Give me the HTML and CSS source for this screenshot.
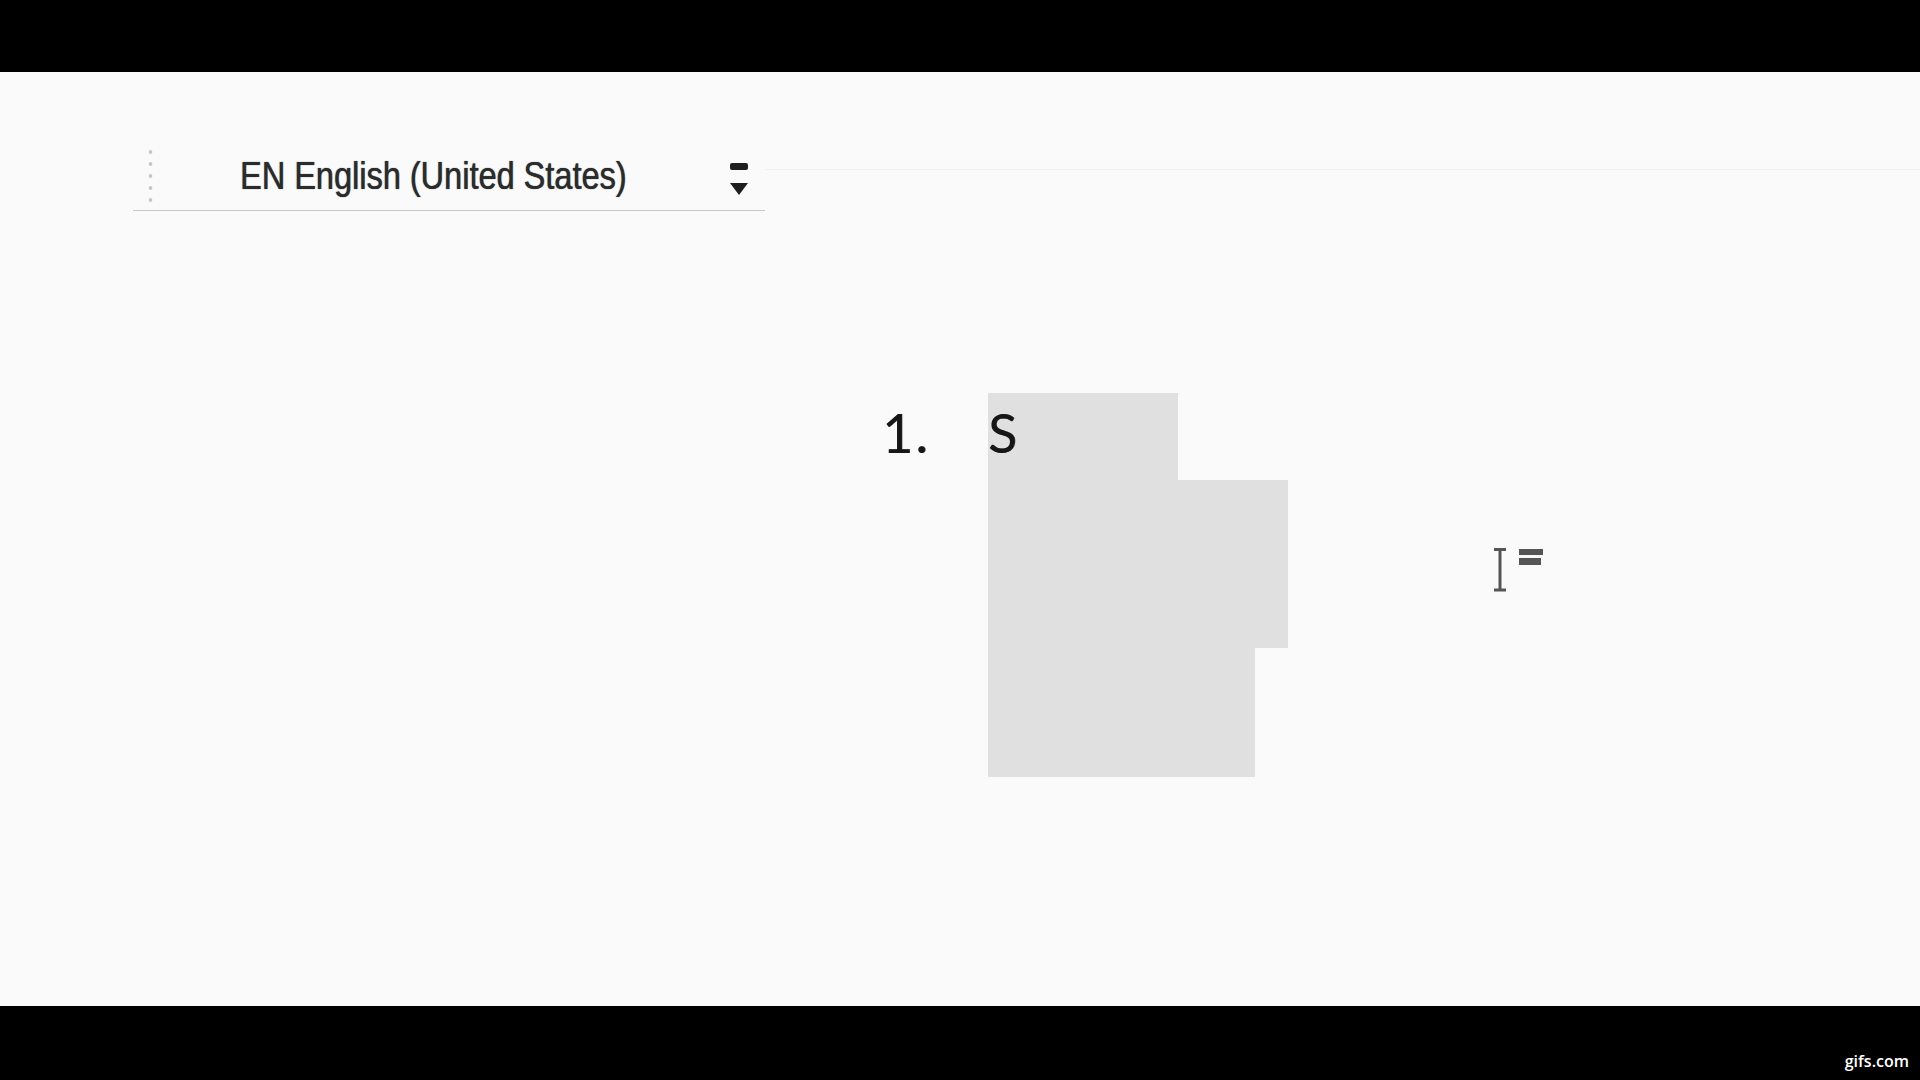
FILE: index.html
```html
<!DOCTYPE html>
<html lang="en">
<head>
<meta charset="utf-8">
<title>Document</title>
<link rel="stylesheet" href="styles.css">
</head>
<body>
<div class="topbar"></div>
<main class="canvas">
  <div class="toolbar-row">
    <div class="lang-select">
      <div class="grip"></div>
      <span class="lang-text">EN English (United States)</span>
      <div class="spacer"></div>
      <svg class="spin" width="18" height="32" viewBox="0 0 18 32">
        <rect x="0" y="0" width="18" height="7" rx="2" fill="#1e1e1e"/>
        <path d="M0 20 H18 L9 32 Z" fill="#1e1e1e"/>
      </svg>
    </div>
    <div class="rule"></div>
  </div>

  <div class="list-row">
    <div class="marker">1.</div>
    <div class="selection">
      <div class="sel sel-a"><span class="glyph">S</span></div>
      <div class="sel sel-b"></div>
      <div class="sel sel-c"></div>
    </div>
  </div>

  <svg class="cursor" width="52" height="44" viewBox="0 0 52 44">
    <path d="M2 1.5 H14 M8 1.5 V42 M2 42 H14" stroke="#555" stroke-width="3" fill="none"/>
    <rect x="27" y="1" width="24" height="6" fill="#555"/>
    <rect x="27" y="10" width="22" height="7" fill="#555"/>
  </svg>
</main>
<footer class="bottombar"><span class="brand">gifs.com</span></footer>
</body>
</html>
```

FILE: styles.css
```css
html, body {
  margin: 0;
  padding: 0;
  background: #000;
}

.topbar {
  height: 72px;
  background: #000;
}

.canvas {
  position: relative;
  height: 934px;
  box-sizing: border-box;
  padding-top: 68px;
  background: #fafafa;
  overflow: hidden;
}

.toolbar-row {
  display: flex;
  align-items: flex-start;
}

.lang-select {
  display: flex;
  align-items: flex-start;
  margin-left: 133px;
  width: 632px;
  height: 70px;
  border-bottom: 1px solid #c9c9c9;
}

.grip {
  width: 5px;
  height: 62px;
  margin-top: 6px;
  margin-left: 15px;
  background-image: radial-gradient(circle, #c4c4c4 1.4px, transparent 2.2px);
  background-size: 5px 12px;
  background-repeat: repeat-y;
}

.lang-text {
  display: inline-block;
  margin-left: 87px;
  margin-top: 20px;
  font-family: "Liberation Sans", Arial, sans-serif;
  font-size: 32.5px;
  line-height: 32px;
  color: #2b2b2b;
  white-space: nowrap;
  transform: scaleY(1.2);
  text-shadow: 0 0 1px rgba(40, 40, 40, 0.8), 0.5px 0 0 rgba(40, 40, 40, 0.5);
}

.spacer {
  flex: 1;
}

.spin {
  display: block;
  margin-top: 23px;
  margin-right: 17px;
}

.rule {
  flex: 1;
  height: 29px;
  border-bottom: 1px solid #f1eff1;
}

.list-row {
  display: flex;
  align-items: flex-start;
  margin-top: 182px;
  margin-left: 882px;
  font-family: Lato, "Open Sans", sans-serif;
  font-size: 54px;
  line-height: 1;
  color: #161616;
  text-shadow: 0.6px 0 0 rgba(22, 22, 22, 0.7);
}

.marker {
  width: 106px;
  padding-top: 13px;
  letter-spacing: 2px;
}

.selection {
  display: flex;
  flex-direction: column;
}

.sel {
  background: #e0e0e0;
}

.sel-a {
  width: 190px;
  height: 87px;
  box-sizing: border-box;
  padding-top: 13px;
}

.sel-b {
  width: 300px;
  height: 168px;
}

.sel-c {
  width: 267px;
  height: 129px;
}

.glyph {
  display: inline-block;
}

.cursor {
  position: absolute;
  left: 1492px;
  top: 476px;
}

.bottombar {
  height: 74px;
  background: #000;
  display: flex;
  justify-content: flex-end;
  align-items: flex-end;
  box-sizing: border-box;
  padding: 0 11px 11px 0;
}

.brand {
  font-family: "Open Sans", sans-serif;
  font-weight: 600;
  font-size: 16px;
  line-height: 1;
  color: #fff;
}
```
